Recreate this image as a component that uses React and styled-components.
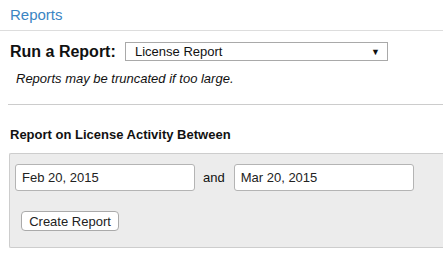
import React from 'react';
import styled, { createGlobalStyle } from 'styled-components';

const GlobalStyle = createGlobalStyle`
  body {
    margin: 0;
    background: #fff;
    font-family: "Liberation Sans", Arial, sans-serif;
    color: #111;
  }
`

const Header = styled.div`
  height: 30px;
  border-bottom: 1px solid #ddd;
  padding: 0 10px;
  display: flex;
  align-items: center;
`
const Title = styled.a`
  font-size: 15px;
  color: #3a85c3;
  text-decoration: none;
  margin-top: -1px;
`

const Content = styled.div`
  margin-left: 8px;
`

const RunRow = styled.div`
  display: flex;
  align-items: center;
  padding: 11px 0 0 2px;
`
const RunLabel = styled.span`
  font-size: 16px;
  font-weight: bold;
  width: 115px;
`
const Select = styled.div`
  height: 17px;
  border: 1px solid #a9a9a9;
  background: #fff;
  display: flex;
  align-items: center;
  justify-content: space-between;
  padding: 0 7px 0 9px;
  font-size: 13px;
  box-sizing: content-box;
  width: 245px;
`
const Arrow = styled.span`
  font-size: 9px;
`

const Note = styled.p`
  margin: 0;
  padding: 10px 0 18px 8px;
  font-size: 13px;
  font-style: italic;
  border-bottom: 1px solid #ccc;
`

const SectionTitle = styled.h3`
  margin: 0;
  padding: 22px 0 0 2px;
  font-size: 13px;
  font-weight: bold;
  line-height: 15px;
`

const Panel = styled.div`
  margin: 11px 0 0 1px;
  height: 95px;
  background: #ececec;
  border: 1px solid #cdcdcd;
  border-right: none;
  border-radius: 2px 0 0 2px;
  padding: 10px 0 0 5px;
  box-sizing: border-box;
`

const DateRow = styled.div`
  display: flex;
  align-items: center;
`
const DateInput = styled.input`
  width: 180px;
  height: 27px;
  box-sizing: border-box;
  border: 1px solid #b4b4b4;
  border-radius: 3px;
  padding: 0 6px;
  font-family: "Liberation Sans", Arial, sans-serif;
  font-size: 13px;
  color: #222;
  background: #fff;
`
const And = styled.span`
  font-size: 13px;
  margin: 0 9px 0 8px;
`

const Button = styled.button`
  margin: 20px 0 0 6px;
  width: 98px;
  height: 20px;
  border: 1px solid #aaa;
  border-radius: 4px;
  background: #fff;
  font-family: "Liberation Sans", Arial, sans-serif;
  font-size: 13px;
  color: #222;
  padding: 0;
  display: block;
`

function App() {
  return (
    <>
      <GlobalStyle />
      <Header>
        <Title href="#">Reports</Title>
      </Header>
      <Content>
        <RunRow>
          <RunLabel>Run a Report:</RunLabel>
          <Select>
            <span>License Report</span>
            <Arrow>▼</Arrow>
          </Select>
        </RunRow>
        <Note>Reports may be truncated if too large.</Note>
        <SectionTitle>Report on License Activity Between</SectionTitle>
        <Panel>
          <DateRow>
            <DateInput defaultValue="Feb 20, 2015" />
            <And>and</And>
            <DateInput defaultValue="Mar 20, 2015" />
          </DateRow>
          <Button>Create Report</Button>
        </Panel>
      </Content>
    </>
  );
}

export default App;
